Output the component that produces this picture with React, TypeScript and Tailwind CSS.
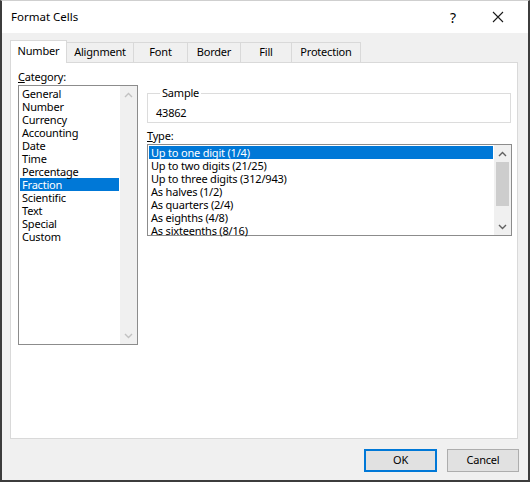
import React from 'react';

const font = { fontFamily: '"Noto Sans", "Liberation Sans", sans-serif' };

const tabs = ['Number', 'Alignment', 'Font', 'Border', 'Fill', 'Protection'];
const tabWidths: Record<string, string> = {
  Number: 'w-[57px]',
  Alignment: 'w-[67px]',
  Font: 'w-[54px]',
  Border: 'w-[53px]',
  Fill: 'w-[51px]',
  Protection: 'w-[69px]',
};

const categories = [
  'General',
  'Number',
  'Currency',
  'Accounting',
  'Date',
  'Time',
  'Percentage',
  'Fraction',
  'Scientific',
  'Text',
  'Special',
  'Custom',
];

const types = [
  'Up to one digit (1/4)',
  'Up to two digits (21/25)',
  'Up to three digits (312/943)',
  'As halves (1/2)',
  'As quarters (2/4)',
  'As eighths (4/8)',
  'As sixteenths (8/16)',
];

function Chevron({ up, color }: { up?: boolean; color: string }) {
  return (
    <svg width="9" height="6" viewBox="0 0 9 6">
      <path
        d={up ? 'M1 5 L4.5 1.5 L8 5' : 'M1 1 L4.5 4.5 L8 1'}
        fill="none"
        stroke={color}
        strokeWidth="1.4"
      />
    </svg>
  );
}

function ListRow({ label, selected }: { label: string; selected?: boolean }) {
  return (
    <div
      className={`h-[13px] leading-[13px] pl-[2px] whitespace-nowrap ${
        selected ? 'bg-[#0078d7] text-white' : 'text-black'
      }`}
    >
      {label}
    </div>
  );
}

export default function App() {
  return (
    <div
      style={font}
      className="w-[530px] h-[482px] flex flex-col bg-[#f0f0f0] border-x-2 border-b-2 border-t border-[#3c3c3c] border-t-[#cfcfcf] text-[11px] tracking-[-0.2px] text-black overflow-hidden"
    >
      {/* Title bar */}
      <div className="h-[32px] shrink-0 bg-white flex items-center pl-[9px] tracking-normal">
        <span className="flex-1 text-[11.5px]">Format Cells</span>
        <span className="text-[14px] w-[12px] text-center mr-[33px]">?</span>
        <svg width="12" height="12" viewBox="0 0 12 12" className="mr-[24px]">
          <path d="M1 1 L11 11 M11 1 L1 11" stroke="#1a1a1a" strokeWidth="1.1" />
        </svg>
      </div>

      {/* Tabs */}
      <div className="h-[29px] shrink-0 flex items-end pl-[8px]">
        {tabs.map((t, i) =>
          i === 0 ? (
            <div
              key={t}
              className={`${tabWidths[t]} h-[23px] -mb-px relative z-10 bg-white border-x border-t border-[#d9d9d9] flex items-center justify-center pb-[2px]`}
            >
              {t}
            </div>
          ) : (
            <div
              key={t}
              className={`${tabWidths[t]} h-[20px] border-t border-r border-[#d9d9d9] flex items-center justify-center`}
            >
              {t}
            </div>
          )
        )}
      </div>

      {/* Panel */}
      <div className="ml-[8px] mr-[10px] h-[377px] shrink-0 bg-white border border-[#d9d9d9] flex gap-[9px] pl-[7px] pt-[7px]">
        {/* Category column */}
        <div className="w-[120px] flex flex-col">
          <div className="h-[14px] leading-[14px]">
            <span className="underline">C</span>ategory:
          </div>
          <div className="mt-[1px] w-[120px] h-[260px] border border-[#8c8c8c] flex">
            <div className="flex-1 p-px">
              {categories.map((c) => (
                <ListRow key={c} label={c} selected={c === 'Fraction'} />
              ))}
            </div>
            <div className="w-[17px] bg-[#f0f0f0] flex flex-col justify-between">
              <div className="h-[17px] flex items-center justify-center">
                <Chevron up color="#c2c2c2" />
              </div>
              <div className="h-[17px] flex items-center justify-center">
                <Chevron color="#c2c2c2" />
              </div>
            </div>
          </div>
        </div>

        {/* Right column */}
        <div className="w-[365px] flex flex-col">
          <fieldset className="mt-[16px] w-[364px] border border-[#dcdcdc] pt-[6px] pb-[2px] pl-[8px]">
            <legend className="ml-[4px] px-[2px] h-[14px] leading-[14px]">Sample</legend>
            <div className="h-[14px] leading-[14px]">43862</div>
          </fieldset>

          <div className="mt-[6px] h-[14px] leading-[14px]">
            <span className="underline">T</span>ype:
          </div>
          <div className="mt-[1px] w-[365px] h-[92px] border border-[#8c8c8c] flex">
            <div className="flex-1 p-px">
              {types.map((t, i) => (
                <ListRow key={t} label={t} selected={i === 0} />
              ))}
            </div>
            <div className="w-[17px] bg-[#f0f0f0] flex flex-col">
              <div className="h-[17px] flex items-center justify-center">
                <Chevron up color="#606060" />
              </div>
              <div className="flex-1 px-[2px]">
                <div className="h-[44px] bg-[#cdcdcd]" />
              </div>
              <div className="h-[17px] flex items-center justify-center">
                <Chevron color="#606060" />
              </div>
            </div>
          </div>
        </div>
      </div>

      {/* Footer buttons */}
      <div className="flex justify-end gap-[10px] pt-[10px] pr-[9px]">
        <button className="w-[73px] h-[23px] bg-[#e1e1e1] border-2 border-[#0078d7] flex items-center justify-center">
          OK
        </button>
        <button className="w-[72px] h-[23px] bg-[#e1e1e1] border border-[#adadad] flex items-center justify-center">
          Cancel
        </button>
      </div>
    </div>
  );
}
